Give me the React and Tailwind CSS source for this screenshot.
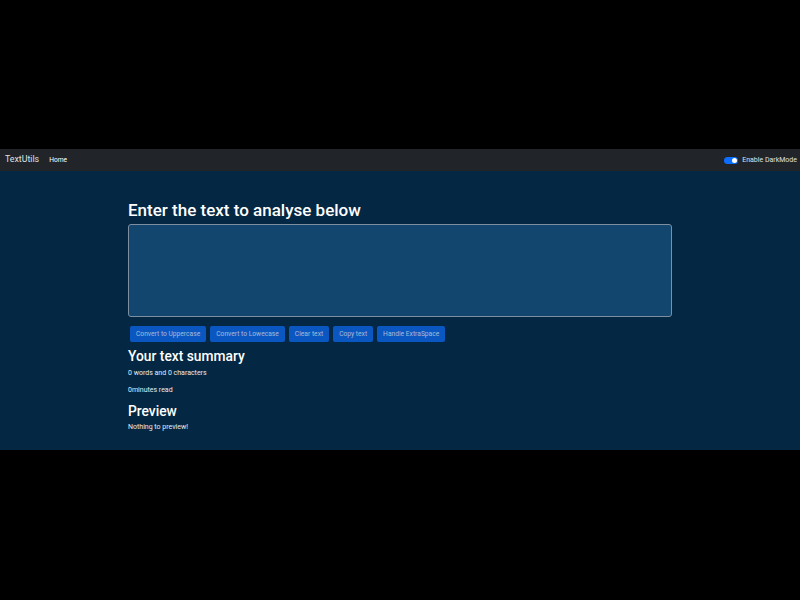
import React, { useState } from 'react';

const buttons = ['Convert to Uppercase', 'Convert to Lowecase', 'Clear text', 'Copy text', 'Handle ExtraSpace'];

export default function App() {
  const [text, setText] = useState('');
  const words = text.split(/\s+/).filter(w => w.length !== 0).length;

  return (
    <div className="w-[800px] h-[600px] bg-black flex flex-col" style={{ fontFamily: 'Roboto, "Liberation Sans", sans-serif' }}>
      <div className="h-[149px]" />
      <nav className="h-[22px] bg-[#212529] flex items-center pl-[5px] pr-[3px]">
        <span className="text-[8.8px] text-[#dee2e6] mr-[10px]">TextUtils</span>
        <span className="text-[6.7px] text-white">Home</span>
        <div className="ml-auto flex items-center gap-[4px]">
          <div className="w-[14px] h-[7px] rounded-full bg-[#0d6efd] flex items-center justify-end pr-[1px]">
            <div className="w-[5px] h-[5px] rounded-full bg-white" />
          </div>
          <span className="text-[7px] text-[#dee2e6]">Enable DarkMode</span>
        </div>
      </nav>
      <main className="h-[279px] bg-[#042743] text-white">
        <div className="w-[544px] mx-auto pt-[28px]">
          <h1 className="text-[17px] leading-[22px] font-medium mb-[3px]">Enter the text to analyse below</h1>
          <textarea
            value={text}
            onChange={e => setText(e.target.value)}
            className="block w-full h-[93px] bg-[#13466e] border border-[#7d8fa0] rounded-[3px] resize-none outline-none text-white text-[8px] p-[3px]"
          />
          <div className="flex gap-[4px] mt-[9px] ml-[2px]">
            {buttons.map(b => (
              <button key={b} className="h-[16px] px-[6px] rounded-[2px] bg-[#0b57c2] text-[#a4bbd8] text-[6.7px] leading-none">
                {b}
              </button>
            ))}
          </div>
          <h2 className="text-[13.8px] leading-[18px] font-medium mt-[5px]">Your text summary</h2>
          <p className="text-[7px] leading-[9px] mt-[4px] text-[#e8edf2]">{words} words and {text.length} characters</p>
          <p className="text-[7px] leading-[9px] mt-[8px] text-[#e8edf2]">{0.008 * words}minutes read</p>
          <h2 className="text-[13.8px] leading-[18px] font-medium mt-[7px]">Preview</h2>
          <p className="text-[7px] leading-[9px] mt-[3px] text-[#e8edf2]">{text.length > 0 ? text : 'Nothing to preview!'}</p>
        </div>
      </main>
    </div>
  );
}
